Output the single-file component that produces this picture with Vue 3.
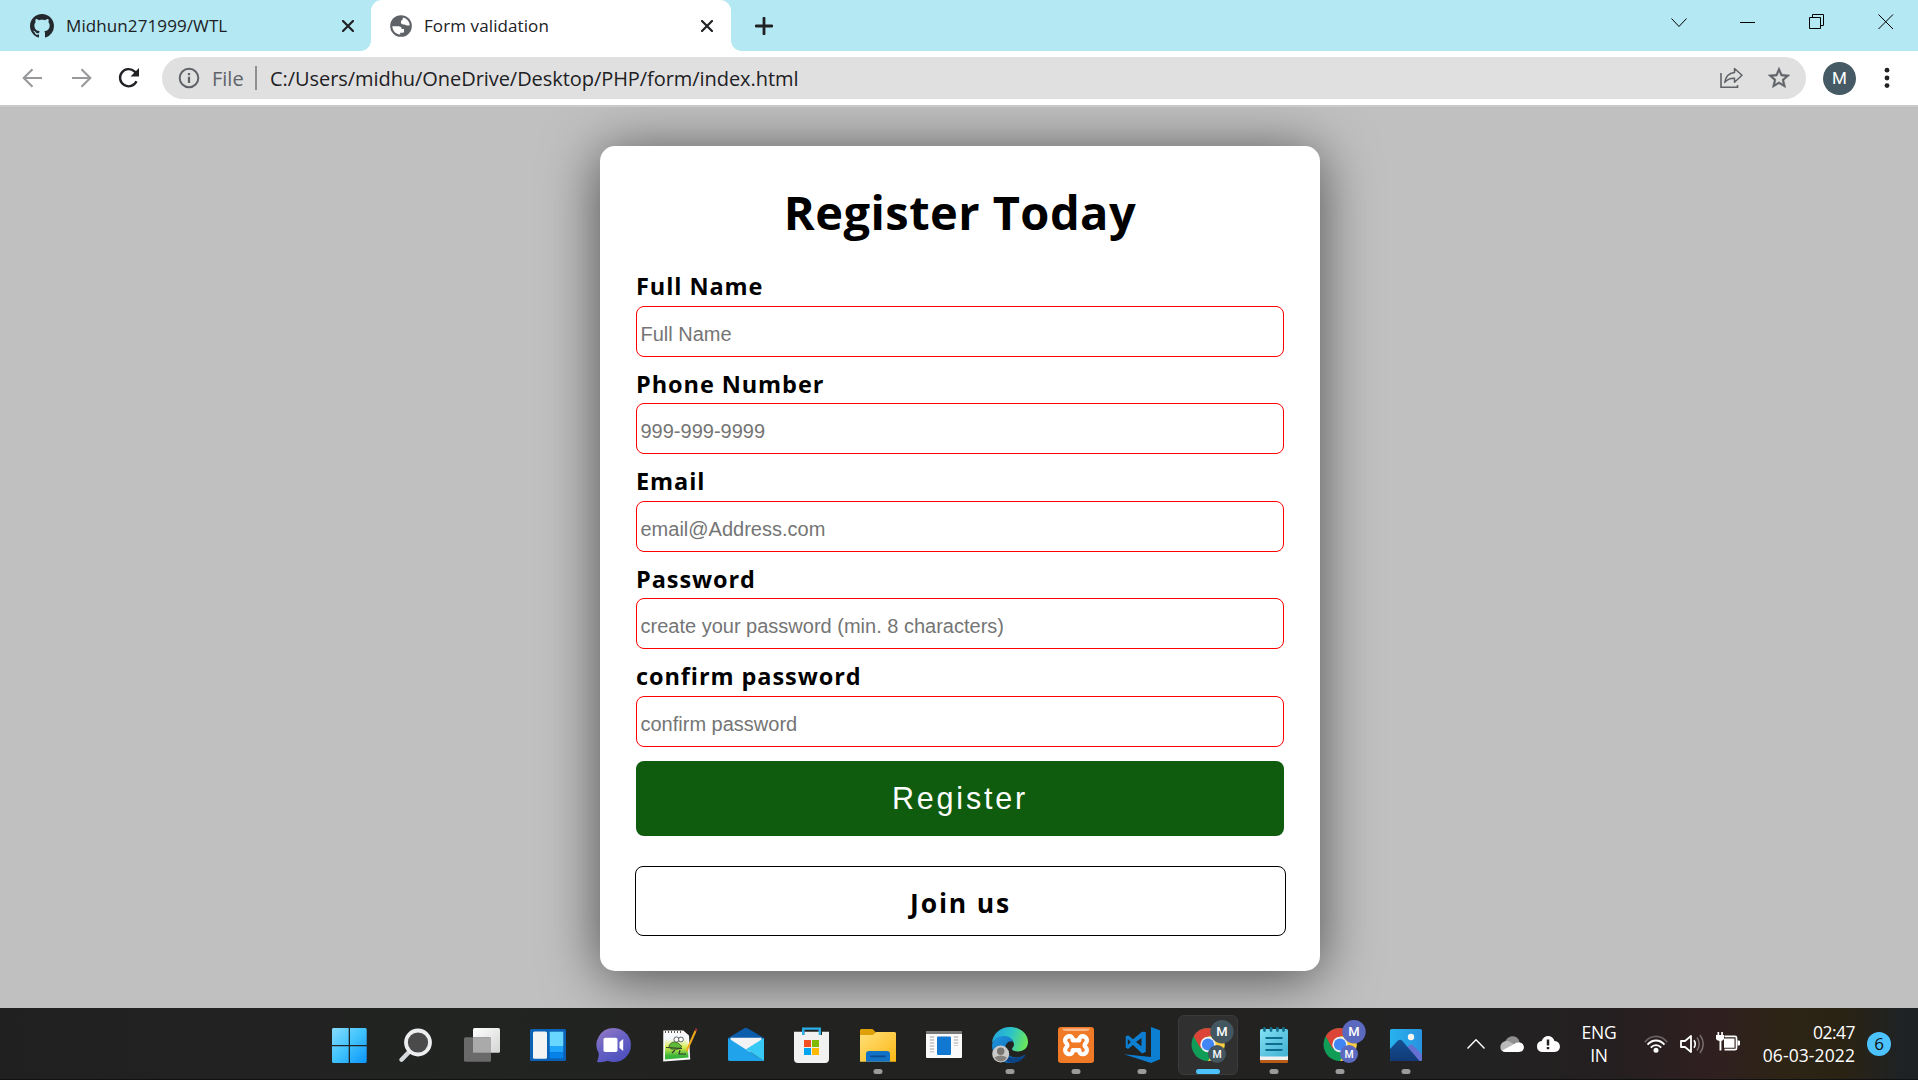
<script setup>
const fields = [
  { id: 'name', label: 'Full Name', hint: 'Full Name', type: 'text' },
  { id: 'phone', label: 'Phone Number', hint: '999-999-9999', type: 'tel' },
  { id: 'email', label: 'Email', hint: 'email@Address.com', type: 'email' },
  { id: 'password', label: 'Password', hint: 'create your password (min. 8 characters)', type: 'password' },
  { id: 'confirm', label: 'confirm password', hint: 'confirm password', type: 'password' },
]
</script>

<template>
  <div class="desktop">
    <header class="tabs">
      <div class="tab first">
        <svg class="github" width="24" height="24" viewBox="0 0 16 16"><path fill="#24292f" d="M8 0C3.58 0 0 3.58 0 8c0 3.54 2.29 6.53 5.47 7.59.4.07.55-.17.55-.38 0-.19-.01-.82-.01-1.49-2.01.37-2.53-.49-2.69-.94-.09-.23-.48-.94-.82-1.13-.28-.15-.68-.52-.01-.53.63-.01 1.08.58 1.23.82.72 1.21 1.87.87 2.33.66.07-.52.28-.87.51-1.07-1.78-.2-3.64-.89-3.64-3.95 0-.87.31-1.59.82-2.15-.08-.2-.36-1.02.08-2.12 0 0 .67-.21 2.2.82.64-.18 1.32-.27 2-.27s1.36.09 2 .27c1.53-1.04 2.2-.82 2.2-.82.44 1.1.16 1.92.08 2.12.51.56.82 1.27.82 2.15 0 3.07-1.87 3.75-3.65 3.95.29.25.54.73.54 1.48 0 1.07-.01 1.93-.01 2.2 0 .21.15.46.55.38A8.01 8.01 0 0 0 16 8c0-4.42-3.58-8-8-8z"/></svg>
        <span class="tab-title">Midhun271999/WTL</span>
        <svg class="tab-close" width="12" height="12" viewBox="0 0 12 12"><path d="M1 1l10 10M11 1L1 11" stroke="#202124" stroke-width="2.2" stroke-linecap="round"/></svg>
      </div>
      <div class="tab active">
        <svg class="globe" width="26" height="26" viewBox="0 0 24 24"><circle cx="12" cy="12" r="10" fill="#5f6368"/><path fill="#fff" d="M13.800 4.200C17.500 5 20 8.100 20 11.600h-2.600c-.9 0-1.300-.9-2.300-.9h-1c-1.300 0-2.200-.9-2.200-2.100 0-2.200 1.900-1.600 1.900-4.400zM4 12.200h5.700c1.800 0 2.900 1 2.900 2.500h2.200v2.300c0 .9-.7 1.300-1.600 1.300h-1.900v1.600C7.200 19.500 4 16.200 4 12.200z"/></svg>
        <span class="tab-title">Form validation</span>
        <svg class="tab-close" width="12" height="12" viewBox="0 0 12 12"><path d="M1 1l10 10M11 1L1 11" stroke="#202124" stroke-width="2.2" stroke-linecap="round"/></svg>
      </div>
      <svg class="new-tab" width="18" height="18" viewBox="0 0 18 18"><path d="M9 1v16M1 9h16" stroke="#202124" stroke-width="2.800" stroke-linecap="round"/></svg>
      <div class="window-controls">
        <svg width="16" height="16" viewBox="0 0 16 16"><path d="M.5 4.500L8 12.500l7.500-8" class="thin"/></svg>
        <svg width="16" height="16" viewBox="0 0 16 16"><path d="M0 8.500h15" class="thin"/></svg>
        <svg width="16" height="16" viewBox="0 0 16 16"><path d="M.5 3.500h11v11H.5zM3.500 3.500v-3h11v11h-3" class="thin"/></svg>
        <svg width="16" height="16" viewBox="0 0 16 16"><path d="M.5.5l14.500 14.500M15 .5L.5 15" class="thin"/></svg>
      </div>
    </header>

    <nav class="toolbar">
      <svg class="back" width="21" height="20" viewBox="0 0 21 20"><path d="M20 10H2M10.500 1.200L1.700 10l8.800 8.800" class="arrow"/></svg>
      <svg class="forward" width="21" height="20" viewBox="0 0 21 20"><path d="M1 10h18M10.500 1.200l8.800 8.800-8.800 8.800" class="arrow"/></svg>
      <svg class="reload" width="22" height="22" viewBox="0 0 22 22"><path d="M18.500 14.200A8.600 8.600 0 1 1 16.700 4.600L19 7" fill="none" stroke="#202124" stroke-width="2.400"/><path d="M21 1v8.500h-8.500z" fill="#202124"/></svg>
      <div class="omnibox">
        <svg width="22" height="22" viewBox="0 0 22 22"><circle cx="11" cy="11" r="9.300" fill="none" stroke="#5f6368" stroke-width="2"/><path d="M11 9.700v6.200M11 6v2.200" stroke="#5f6368" stroke-width="2.200"/></svg>
        <span class="scheme">File</span>
        <span class="divider"></span>
        <span class="url">C:/Users/midhu/OneDrive/Desktop/PHP/form/index.html</span>
        <svg class="share" width="24" height="22" viewBox="0 0 24 22"><path d="M2 6v14.200h16.500V18" fill="none" stroke="#5f6368" stroke-width="1.600"/><path d="M15.500 1.500L23 8.300l-7.500 6.900v-4c-4.500-.2-7.500 1.200-9.700 4.200.6-5.200 3.500-9.300 9.700-10z" fill="none" stroke="#5f6368" stroke-width="1.500" stroke-linejoin="round"/></svg>
        <svg class="star" width="26" height="26" viewBox="0 0 24 24"><path fill="#5f6368" stroke="#5f6368" stroke-width=".4" d="M22 9.240l-7.190-.62L12 2 9.190 8.630 2 9.240l5.460 4.730L5.820 21 12 17.270 18.180 21l-1.630-7.030L22 9.240zM12 15.400l-3.760 2.270 1-4.280-3.320-2.880 4.380-.38L12 6.100l1.710 4.040 4.380.38-3.320 2.880 1 4.280L12 15.400z"/></svg>
      </div>
      <span class="profile">M</span>
      <svg class="kebab" width="6" height="22" viewBox="0 0 6 22"><g fill="#202124"><circle cx="3" cy="3.200" r="2.400"/><circle cx="3" cy="11" r="2.400"/><circle cx="3" cy="18.600" r="2.400"/></g></svg>
    </nav>

    <main class="page">
      <form class="card" @submit.prevent>
        <h1>Register Today</h1>
        <div v-for="f in fields" :key="f.id" class="field">
          <label :for="f.id">{{ f.label }}</label>
          <input :id="f.id" :type="f.type" :placeholder="f.hint">
        </div>
        <button type="submit">Register</button>
        <a class="join">Join us</a>
      </form>
    </main>

    <footer class="taskbar">
      <div class="apps">
        <!-- Start -->
        <svg viewBox="0 0 66 72">
          <defs><linearGradient id="win" gradientUnits="userSpaceOnUse" x1="15" y1="20" x2="50" y2="55"><stop offset="0" stop-color="#86dcff"/><stop offset=".5" stop-color="#3fc2fb"/><stop offset="1" stop-color="#0a94fb"/></linearGradient></defs>
          <path fill="url(#win)" d="M16 20h15.700v17H15V21zM33 20h15.700l1 1v16H33zM15 38.200h16.700V55H16l-1-1zM33 38.200h16.700V54l-1 1H33z"/>
        </svg>
        <!-- Search -->
        <svg viewBox="0 0 66 72"><path d="M26.500 43.500l-8 8.200" stroke="#d5d9dc" stroke-width="4.500" stroke-linecap="round"/><circle cx="35" cy="34.500" r="12" fill="#4a4a4a" stroke="#eceeef" stroke-width="3.800"/></svg>
        <!-- Task view -->
        <svg viewBox="0 0 66 72">
          <defs><linearGradient id="tv" x1="0" y1="0" x2="1" y2="1"><stop offset="0" stop-color="#fff"/><stop offset="1" stop-color="#d4d4d4"/></linearGradient></defs>
          <rect x="24" y="20" width="27" height="24.700" rx="1.500" fill="url(#tv)"/><rect x="15" y="29.300" width="27" height="24.500" rx="1.500" fill="#6a6a6a"/><path d="M24 29.300h18v15.400H24z" fill="#aaa"/>
        </svg>
        <!-- Widgets -->
        <svg viewBox="0 0 66 72"><rect x="15" y="21" width="36" height="32" rx="1.500" fill="#0a61b5"/><rect x="18" y="23.500" width="14" height="27.200" rx="1.500" fill="#f3f3f3"/><path fill="#68d6ff" d="M34.700 23.700h13.600V38H34.700z"/><path fill="#1fa5fb" d="M34.700 38h13.600v6.300H34.700z"/><path fill="#0583e9" d="M34.700 44.300h13.600v6H34.700z"/></svg>
        <!-- Chat -->
        <svg viewBox="0 0 66 72">
          <defs><linearGradient id="chat" x1="0" y1="0" x2=".6" y2="1"><stop offset="0" stop-color="#9a7cc4"/><stop offset=".5" stop-color="#6a62c4"/><stop offset="1" stop-color="#4f51bf"/></linearGradient></defs>
          <path fill="url(#chat)" d="M33 20a17 17 0 1 1-6.300 32.800c-3 1.300-6.500 1.700-10.700 1.200.8-2.600 1.700-4.500 1.800-8.500A17 17 0 0 1 33 20z"/><rect x="22.500" y="29.800" width="14" height="14.200" rx="1.800" fill="#fff"/><path fill="#fff" d="M42.200 31v12l-3.700-3v-6z"/>
        </svg>
        <!-- Notepad++ -->
        <svg viewBox="0 0 66 72">
          <defs><linearGradient id="npp" x1="0" y1="0" x2="0" y2="1"><stop offset=".15" stop-color="#f4f8ff"/><stop offset=".5" stop-color="#d8ee4e"/><stop offset=".85" stop-color="#3bb43a"/></linearGradient></defs>
          <path fill="#fafafa" d="M16.300 22.500h20l5.700 5 1.200 24-27 2z"/><path fill="url(#npp)" d="M18 27h22l1.500 22.500L18 51.500z"/><path d="M18 24h17" stroke="#555" stroke-width="2" stroke-dasharray="1 2"/><path d="M22 38c1.500-4.500 7-5 9-3l4 3.500c-3 2.500-5 3.500-7.500 2.500-2.500 1-4.500 0-5.500-3z" fill="#61ba35" stroke="#315a24" stroke-width=".8"/><path d="M19 39.500l16 1M28 42l-3 3m8-3l-1 4h7" stroke="#333" stroke-width="1.100" fill="none"/><circle cx="29.500" cy="31.500" r="2.600" fill="#fff" stroke="#444" stroke-width=".8"/><circle cx="34" cy="31.500" r="2.400" fill="#fff" stroke="#444" stroke-width=".8"/><path d="M48.500 23L39.500 43" stroke="#f2aa1c" stroke-width="2"/><path d="M49.500 20.700l-1 2.500" stroke="#a43432" stroke-width="2.200"/>
        </svg>
        <!-- Mail -->
        <svg viewBox="0 0 66 72"><path fill="#0b5cab" d="M15 30L31.500 20.200q1.500-1 3 0L51 30v6H15z"/><path fill="#f3f3f5" d="M17.500 29.800h31v8L33 47l-15.500-9z"/><path fill="#20a3ea" d="M15 30l36 23H16l-1-1z"/><path fill="#38c8f4" d="M51 30v23L33 41.300z"/></svg>
        <!-- Store -->
        <svg viewBox="0 0 66 72"><path d="M24.200 27v-6.300h16.600V27" fill="none" stroke="#2db1ec" stroke-width="2.200"/><path fill="#f1f1f2" d="M15 23.700h8v3.300h2.400v-3.300h15.200V27H43v-3.300h7V51q0 4-4 4H19q-4 0-4-4z"/><path d="M24.200 22v5M40.800 22v5" stroke="#2db1ec" stroke-width="2.200"/><path fill="#f25022" d="M25 32h7v7h-7z"/><path fill="#7fba00" d="M33 32h7v7h-7z"/><path fill="#00a4ef" d="M25 40h7v7h-7z"/><path fill="#ffb900" d="M33 40h7v7h-7z"/></svg>
        <!-- File Explorer -->
        <svg viewBox="0 0 66 72">
          <defs><linearGradient id="fold" x1="0" y1="0" x2="1" y2="1"><stop offset="0" stop-color="#ffe07a"/><stop offset="1" stop-color="#fcb814"/></linearGradient></defs>
          <path fill="#e0a009" d="M16 21h11.500l3 3V30H15v-8z"/><path fill="url(#fold)" d="M31 24h19l1 1v28.700H15V27h13z"/><path fill="#1272c6" d="M21 53.700V46q0-3 3-3h18q3 0 3 3v7.700z"/><path d="M26 48.300h14" stroke="#0a4b91" stroke-width="1.800" stroke-linecap="round"/><rect x="28.500" y="61" width="9" height="5" rx="2.500" fill="#9b9b9b"/>
        </svg>
        <!-- Generic app window -->
        <svg viewBox="0 0 66 72"><rect x="15" y="23" width="36" height="27" rx="1" fill="#fafafa"/><path fill="#777" d="M15 23h36v3H15z"/><rect x="26" y="28.500" width="14" height="18.500" rx="1" fill="#1279d2"/><path d="M21 28v16.500M45 28v10" stroke="#d0d0d0" stroke-width="4.300" stroke-dasharray="2 1"/></svg>
        <!-- Edge -->
        <svg viewBox="0 0 66 72">
          <defs><linearGradient id="e1" x1="0" y1=".3" x2="1" y2=".5"><stop offset="0" stop-color="#23a4dc"/><stop offset=".5" stop-color="#2cc3c9"/><stop offset="1" stop-color="#6be85a"/></linearGradient><linearGradient id="e2" x1="0" y1="0" x2="1" y2="1"><stop offset="0" stop-color="#1e95df"/><stop offset="1" stop-color="#0c59a4"/></linearGradient></defs>
          <path fill="url(#e1)" d="M15 35C15.500 26 23 19 33 19c10.500 0 18 7 18 15 0 6-4.500 9.500-10 9.500-3.500 0-6-1-6-2.500 0-1.500 2-2 2-4.500 0-4-5-7.500-10.500-7.500-5 0-9 2-11.500 6z"/><path fill="url(#e2)" d="M15 37c1-5 5.500-9 11.500-9 4.500 0 8.500 2 10 5.500C31 32 28 36 28.500 41c.8 7 10 12 20 5.500C45.500 51.500 40 55 33 55c-10.500 0-18-8-18-18z"/><path fill="#0b4385" d="M26.500 40c0 9 13 13.500 22.300 6.500C45 54.500 36 56 31 54c-4.500-2-7-8-4.500-14z"/>
          <circle cx="23.700" cy="46" r="8.500" fill="#c9c9c9"/><circle cx="23.700" cy="43.300" r="3.700" fill="#77736f"/><path fill="#85817d" d="M17.500 49.500q6.200-4 12.400 0-2.500 4-6.200 4t-6.200-4z"/><rect x="28.500" y="61" width="9" height="5" rx="2.500" fill="#9b9b9b"/>
        </svg>
        <!-- XAMPP -->
        <svg viewBox="0 0 66 72"><rect x="15" y="19" width="36" height="36" rx="3" fill="#f17a26"/><path d="M19 20.500h28q-1 2.500-4 2.500H23q-3 0-4-2.500z" fill="#f8b78b"/><path d="M33 32.300h-3.300c.6-6-8.200-5-7.500.7.300 2.200 2.200 2.400 2.200 4.200s-1.900 2-2.200 4.200c-.7 5.700 8.100 6.700 7.500.7H33h3.300c-.6 6 8.200 5 7.500-.7-.3-2.200-2.200-2.400-2.200-4.200s1.900-2 2.200-4.200c.7-5.700-8.100-6.700-7.500-.7z" fill="none" stroke="#fff" stroke-width="4.300" stroke-linejoin="round"/><rect x="28.500" y="61" width="9" height="5" rx="2.500" fill="#9b9b9b"/></svg>
        <!-- VS Code -->
        <svg viewBox="0 0 66 72"><path fill="#0d7fd3" d="M42 19l9 3.300v29L42 55 15 46.200l27 2.800zM36.800 24v20L33 45.500l-9-8.500-5 4-2.300-1.400V28.500L19 27.200l5 4 9-7.500zm-4.300 6L27 34l5.500 4.200zM18.800 31v6l3-3z" fill-rule="evenodd"/><rect x="28.500" y="61" width="9" height="5" rx="2.500" fill="#9b9b9b"/></svg>
        <!-- Chrome, one window in focus -->
        <svg viewBox="0 0 66 72">
          <rect x="3.500" y="7.500" width="59" height="59" rx="5.500" fill="#303030" stroke="#3b3b3b"/>
          <circle cx="33" cy="36.500" r="16.500" fill="#109d58"/><path fill="#db4437" d="M18.700 28.200a16.500 16.500 0 0 1 28.600 0H33l-7.200 12.500z"/><path fill="#ffcd40" d="M47.300 28.200A16.500 16.500 0 0 1 33 53l7.200-12.300L33 28.200z"/><circle cx="33" cy="36.500" r="7.700" fill="#f1f1f1"/><circle cx="33" cy="36.500" r="6.100" fill="#4285f4"/>
          <circle cx="47" cy="23.700" r="11.700" fill="#44565f"/><text x="47" y="28.300" class="mark big">M</text><circle cx="42" cy="46" r="9" fill="#44565f"/><text x="42" y="49.700" class="mark">M</text><rect x="21" y="61" width="24" height="5" rx="2.500" fill="#4cc2ff"/>
        </svg>
        <!-- Notepad -->
        <svg viewBox="0 0 66 72">
          <defs><linearGradient id="note" x1="0" y1="0" x2="1" y2="1"><stop offset="0" stop-color="#84e0f2"/><stop offset="1" stop-color="#3fb0d3"/></linearGradient></defs>
          <rect x="19" y="49" width="28" height="6" rx="1" fill="#b85c17"/><path fill="#f1f1f1" d="M19 47h28v5H19z"/><rect x="19" y="21" width="28" height="27.500" rx="1.500" fill="url(#note)"/><path d="M24.500 30h17M24.500 36h17M24.500 42h17" stroke="#0e6d8e" stroke-width="1.800"/><path d="M23.500 20.500v2M30 20.500v2M36.500 20.500v2M42.500 20.500v2" stroke="#12718f" stroke-width="2.800" stroke-linecap="round"/><rect x="28.500" y="61" width="9" height="5" rx="2.500" fill="#9b9b9b"/>
        </svg>
        <!-- Chrome, second profile -->
        <svg viewBox="0 0 66 72">
          <circle cx="33" cy="36.500" r="16.500" fill="#109d58"/><path fill="#db4437" d="M18.700 28.200a16.500 16.500 0 0 1 28.600 0H33l-7.200 12.500z"/><path fill="#ffcd40" d="M47.300 28.200A16.500 16.500 0 0 1 33 53l7.200-12.300L33 28.200z"/><circle cx="33" cy="36.500" r="7.700" fill="#f1f1f1"/><circle cx="33" cy="36.500" r="6.100" fill="#4285f4"/>
          <circle cx="47" cy="23.700" r="11.700" fill="#5b6abf"/><text x="47" y="28.300" class="mark big">M</text><circle cx="42" cy="46" r="9" fill="#5b6abf"/><text x="42" y="49.700" class="mark">M</text><rect x="28.500" y="61" width="9" height="5" rx="2.500" fill="#9b9b9b"/>
        </svg>
        <!-- Photos -->
        <svg viewBox="0 0 66 72">
          <defs><linearGradient id="sky" x1="0" y1="0" x2="1" y2="0"><stop offset="0" stop-color="#26b2ee"/><stop offset="1" stop-color="#2a93df"/></linearGradient><linearGradient id="hill" x1="0" y1="0" x2="0" y2="1"><stop offset="0" stop-color="#164f92"/><stop offset="1" stop-color="#103a78"/></linearGradient></defs>
          <rect x="17" y="21" width="32" height="32" rx="1.500" fill="url(#sky)"/><path fill="#6470d2" d="M30 45l6-7.500q2-2 4 0l9 9V52l-1 1H33z"/><path fill="url(#hill)" d="M17 41l8-8.500q2-1.500 4 0L46.500 53H18l-1-1z"/><circle cx="38" cy="29" r="3.200" fill="#f7f3ef"/><rect x="28.500" y="61" width="9" height="5" rx="2.500" fill="#9b9b9b"/>
        </svg>
      </div>

      <div class="tray">
        <svg width="18" height="12" viewBox="0 0 18 12"><path d="M.5 10.500L9 1.700l8.500 8.800" fill="none" stroke="#fff" stroke-width="1.400"/></svg>
        <svg class="cloud" width="24" height="17" viewBox="0 0 24 17"><path fill="#8f8f8f" d="M5 6.500C7-1 17-2 19.500 5.500L13 9z"/><path fill="#b9b9b9" d="M1 14C-1.500 8 4 3.500 9 5.300L21 12l-3 4H6q-3.500 0-5-2z"/><path fill="#fff" d="M2 14.500L14 8.200q2-2.400 5.500-2c4.500.6 6 6.500 2.500 9l-3 .8H6q-2.500 0-4-1.500z"/></svg>
        <svg class="alert" width="24" height="17" viewBox="0 0 24 17"><path fill="#fff" d="M6 16a5.600 5.600 0 0 1-.3-11.100C8-1.500 16.500-1.500 18.500 5 26 5.500 25.500 16 18.500 16z"/><path d="M12 3.500v6M12 11v2.300" stroke="#222" stroke-width="2.500"/></svg>
        <div class="lang"><span>ENG</span><span>IN</span></div>
        <svg class="wifi" width="24" height="18" viewBox="0 0 24 18"><g fill="none" stroke="#fff" stroke-width="1.800"><path d="M.8 7.200C7-.5 17-.5 23.200 7.200" stroke-opacity=".3"/><path d="M3.500 9.600c5-5.500 12-5.500 17 0"/><path d="M6.800 12.700c3-3.500 7.400-3.500 10.400 0"/></g><circle cx="12" cy="15.200" r="2.500" fill="#fff"/></svg>
        <svg class="sound" width="26" height="20" viewBox="0 0 26 20"><path d="M1 7v6h4l6 5V2L5 7z" fill="none" stroke="#fff" stroke-width="1.800" stroke-linejoin="round"/><path d="M14 6.300q2.500 3.700 0 7.400" fill="none" stroke="#fff" stroke-width="1.600"/><path d="M17 3.500q4.500 6.500 0 13M20 1q6.500 9 0 18" fill="none" stroke="#fff" stroke-opacity=".35" stroke-width="1.500"/></svg>
        <svg class="battery" width="24" height="20" viewBox="0 0 24 20"><path d="M8.500 4.300H19q1.500 0 1.500 1.500v10.400q0 1.500-1.500 1.500H8.500" fill="none" stroke="#fff" stroke-width="1.700"/><path fill="#fff" d="M8 6.500h10.500v9.200H8zM21.500 8.500H23q1 0 1 1v3q0 1-1 1h-1.500z"/><path fill="#fff" d="M1.500 0h1.700v3h2V0h1.700v3H8v3.500q0 1.700-2.600 2.500v9.500H3.500V9Q0 8 0 6.500V3h1.500z"/></svg>
        <div class="clock"><span class="time">02:47</span><span class="date">06-03-2022</span></div>
        <span class="count">6</span>
      </div>
    </footer>
  </div>
</template>

<style>
body { margin: 0; overflow: hidden; }
</style>

<style scoped>
.desktop {
  display: flex;
  flex-direction: column;
  width: 1918px;
  height: 1080px;
  font-family: "Open Sans", "Noto Sans", sans-serif;
}
svg { display: block; flex: none; }
.thin { fill: none; stroke: #000; stroke-width: 1; }
.arrow { fill: none; stroke: #98999b; stroke-width: 2.1; }

.tabs {
  display: flex;
  align-items: center;
  height: 51px;
  background: #b4e8f2;
  color: #202124;
}
.tab {
  position: relative;
  display: flex;
  align-items: center;
  box-sizing: border-box;
  height: 51px;
  font-size: 17px;
  letter-spacing: 0.1px;
}
.first { width: 371px; padding: 0 17px 0 30px; }
.first .tab-title { margin-left: 12px; }
.active { width: 360px; padding: 0 18px 0 17px; background: #fff; border-radius: 11px 11px 0 0; }
.active .tab-title { margin-left: 10px; }
.active::before, .active::after {
  content: "";
  position: absolute;
  bottom: 0;
  width: 10px;
  height: 10px;
}
.active::before { left: -10px; background: radial-gradient(circle at 0 0, #b4e8f2 9.500px, #fff 10px); }
.active::after { right: -10px; background: radial-gradient(circle at 100% 0, #b4e8f2 9.500px, #fff 10px); }
.tab-close { margin-left: auto; }
.new-tab { margin-left: 24px; }
.window-controls { display: flex; gap: 53px; margin-left: auto; margin-right: 24px; padding-bottom: 7px; }

.toolbar {
  display: flex;
  align-items: center;
  height: 54px;
  background: #fff;
  font-size: 20px;
}
.back { margin-left: 22px; }
.forward { margin-left: 28px; }
.reload { margin-left: 26px; }
.omnibox {
  display: flex;
  align-items: center;
  box-sizing: border-box;
  width: 1644px;
  height: 42px;
  margin-left: 22px;
  padding: 0 14px 0 16px;
  border-radius: 21px;
  background: #e0e0e0;
  color: #202124;
}
.scheme { width: 42px; margin-left: 12px; color: #5f6368; }
.divider { width: 2px; height: 24px; margin: 0 13px 0 1px; background: #8e8f91; }
.url { letter-spacing: -0.06px; }
.share { margin-left: auto; }
.star { margin-left: 23px; }
.profile {
  width: 33px;
  height: 33px;
  margin-left: 17px;
  border-radius: 50%;
  background: #455a64;
  color: #fff;
  font: 17px/33px Roboto, sans-serif;
  text-align: center;
}
.kebab { margin-left: 28px; }

.page {
  display: flex;
  justify-content: center;
  align-items: flex-start;
  box-sizing: border-box;
  height: 903px;
  padding: 39px 0 0 2px;
  border-top: 2px solid #cacaca;
  background: #c0c0c0;
  overflow: hidden;
}
.card {
  display: flex;
  flex-direction: column;
  box-sizing: border-box;
  width: 720px;
  height: 825px;
  padding: 36px 36px 35px;
  border-radius: 15px;
  background: #fff;
  box-shadow: 0 6px 56px rgba(0, 0, 0, 0.6);
  color: #000;
}
h1 {
  margin: 0 0 24px;
  font-size: 47px;
  line-height: 60px;
  letter-spacing: 0.45px;
  text-align: center;
}
.field { margin-bottom: 6px; }
.field:nth-of-type(even) { margin-bottom: 7px; }
label {
  display: block;
  font-size: 23.500px;
  font-weight: 700;
  line-height: 40px;
  letter-spacing: 0.92px;
}
.field:nth-of-type(even) label { height: 39px; padding-top: 1px; }
input {
  display: block;
  box-sizing: border-box;
  width: 648px;
  height: 51px;
  padding: 5px 3px 0 3.500px;
  border: 1px solid #f00;
  border-radius: 8px;
  font: 20px "Liberation Sans", Arial, sans-serif;
}
input::placeholder { color: #757575; opacity: 1; }
button {
  flex: none;
  height: 75px;
  margin-top: 8px;
  padding: 0;
  border: 0;
  border-radius: 8px;
  background: #0f5c0f;
  color: #fff;
  font: 30.500px "Liberation Sans", Arial, sans-serif;
  letter-spacing: 2.8px;
}
.join {
  box-sizing: border-box;
  flex: none;
  height: 70px;
  margin: 30px -2px 0 -1px;
  padding-top: 2px;
  border: 1px solid #000;
  border-radius: 8px;
  font-size: 26.500px;
  font-weight: 700;
  line-height: 68px;
  letter-spacing: 1.8px;
  text-align: center;
}

.taskbar {
  display: flex;
  box-sizing: border-box;
  height: 72px;
  padding-left: 317px;
  border-bottom: 1px solid #111;
  background: linear-gradient(90deg, #202020 0, #222422 25%, #222220 50%, #232222 78%, #241f20 84%, #301f21 89%, #2d2415 93%, #2a2313 96%, #1f2224 99%);
}
.apps { display: flex; }
.apps svg { width: 66px; height: 72px; }
.mark { fill: #fff; font: 500 10.500px Roboto, sans-serif; text-anchor: middle; }
.big { font-size: 13px; }
.tray {
  display: flex;
  align-items: center;
  height: 72px;
  margin-left: 28px;
  color: #fff;
  font-size: 17.500px;
  line-height: 23px;
}
.cloud { margin-left: 15px; }
.alert { margin-left: 12px; }
.lang { display: flex; flex-direction: column; width: 46px; margin-left: 16px; text-align: center; letter-spacing: -0.2px; }
.wifi { margin-left: 22px; }
.sound { margin-left: 12px; }
.battery { margin-left: 10px; margin-bottom: 4px; }
.clock { display: flex; flex-direction: column; width: 115px; text-align: right; }
.time { letter-spacing: -0.5px; }
.date { letter-spacing: 0.1px; }
.count {
  width: 24px;
  height: 24px;
  margin-left: 12px;
  border-radius: 50%;
  background: #4cc2ff;
  color: #111;
  font-size: 17px;
  line-height: 24px;
  text-align: center;
}
</style>
